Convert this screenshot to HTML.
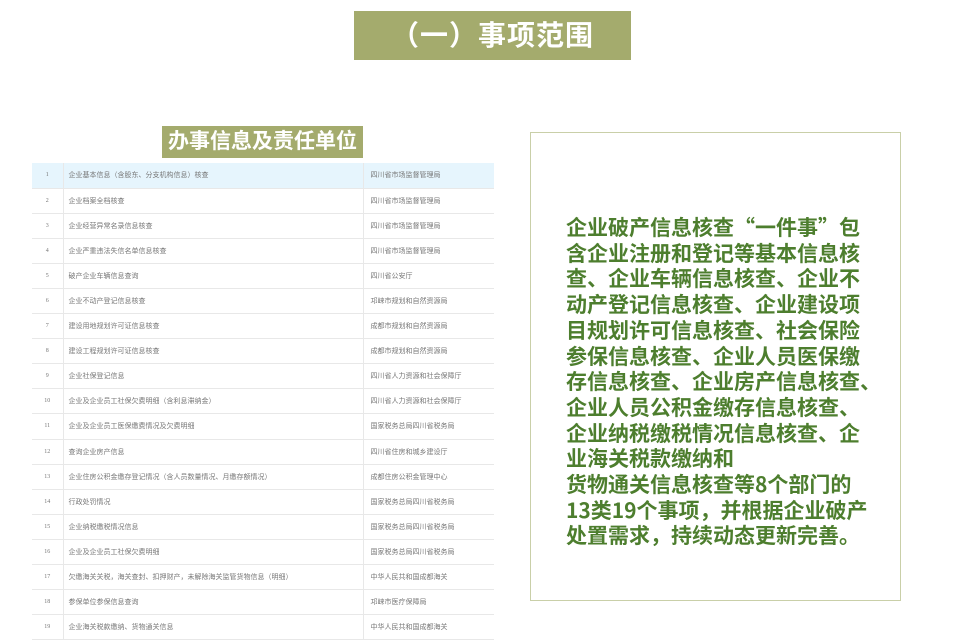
<!DOCTYPE html>
<html><head><meta charset="utf-8"><style>
*{margin:0;padding:0;box-sizing:border-box}
body{width:960px;height:639px;background:#fff;position:relative;overflow:hidden;font-family:"Liberation Sans","Noto Sans CJK SC",sans-serif}
.t1{position:absolute;left:354px;top:11px;width:277px;height:49px;background:#a4ab6d;color:#fff;font-size:28px;font-weight:bold;text-align:center;line-height:49px;letter-spacing:1px}
.t2{position:absolute;left:162px;top:126px;width:201px;height:32px;background:#a4ab6d;color:#fff;font-size:21px;font-weight:bold;text-align:center;line-height:32px}
table{position:absolute;left:32px;top:163px;width:462px;border-collapse:collapse;font-size:7px;color:#777}
td{height:25.1px;border-bottom:1px solid #e8e8e8;vertical-align:middle;white-space:nowrap}
td.n{width:31px;text-align:center;font-size:6px;font-family:"Liberation Serif",serif;border-right:1px solid #e8e8e8}
td.a{width:300px;padding-left:5px;border-right:1px solid #e8e8e8}
td.b{padding-left:7px}
tr.h td{background:#e6f5fd}
.box{position:absolute;left:530px;top:132px;width:371px;height:469px;border:1px solid #c9cfa8}
.txt{position:absolute;left:566px;top:215px;font-family:"Noto Sans CJK SC",sans-serif;font-size:21px;line-height:25.7px;font-weight:bold;color:#4d7e2e;white-space:nowrap}
</style></head><body>
<div class="t1">（一）事项范围</div>
<div class="t2">办事信息及责任单位</div>
<table>
<tr class="h"><td class="n">1</td><td class="a">企业基本信息（含股东、分支机构信息）核查</td><td class="b">四川省市场监督管理局</td></tr>
<tr><td class="n">2</td><td class="a">企业档案全档核查</td><td class="b">四川省市场监督管理局</td></tr>
<tr><td class="n">3</td><td class="a">企业经营异常名录信息核查</td><td class="b">四川省市场监督管理局</td></tr>
<tr><td class="n">4</td><td class="a">企业严重违法失信名单信息核查</td><td class="b">四川省市场监督管理局</td></tr>
<tr><td class="n">5</td><td class="a">破产企业车辆信息查询</td><td class="b">四川省公安厅</td></tr>
<tr><td class="n">6</td><td class="a">企业不动产登记信息核查</td><td class="b">邛崃市规划和自然资源局</td></tr>
<tr><td class="n">7</td><td class="a">建设用地规划许可证信息核查</td><td class="b">成都市规划和自然资源局</td></tr>
<tr><td class="n">8</td><td class="a">建设工程规划许可证信息核查</td><td class="b">成都市规划和自然资源局</td></tr>
<tr><td class="n">9</td><td class="a">企业社保登记信息</td><td class="b">四川省人力资源和社会保障厅</td></tr>
<tr><td class="n">10</td><td class="a">企业及企业员工社保欠费明细（含利息滞纳金）</td><td class="b">四川省人力资源和社会保障厅</td></tr>
<tr><td class="n">11</td><td class="a">企业及企业员工医保缴费情况及欠费明细</td><td class="b">国家税务总局四川省税务局</td></tr>
<tr><td class="n">12</td><td class="a">查询企业房产信息</td><td class="b">四川省住房和城乡建设厅</td></tr>
<tr><td class="n">13</td><td class="a">企业住房公积金缴存登记情况（含人员数量情况、月缴存额情况）</td><td class="b">成都住房公积金管理中心</td></tr>
<tr><td class="n">14</td><td class="a">行政处罚情况</td><td class="b">国家税务总局四川省税务局</td></tr>
<tr><td class="n">15</td><td class="a">企业纳税缴税情况信息</td><td class="b">国家税务总局四川省税务局</td></tr>
<tr><td class="n">16</td><td class="a">企业及企业员工社保欠费明细</td><td class="b">国家税务总局四川省税务局</td></tr>
<tr><td class="n">17</td><td class="a">欠缴海关关税，海关查封、扣押财产，未解除海关监管货物信息（明细）</td><td class="b">中华人民共和国成都海关</td></tr>
<tr><td class="n">18</td><td class="a">参保单位参保信息查询</td><td class="b">邛崃市医疗保障局</td></tr>
<tr><td class="n">19</td><td class="a">企业海关税款缴纳、货物通关信息</td><td class="b">中华人民共和国成都海关</td></tr>
</table>
<div class="box"></div>
<div class="txt">企业破产信息核查“一件事”包<br>含企业注册和登记等基本信息核<br>查、企业车辆信息核查、企业不<br>动产登记信息核查、企业建设项<br>目规划许可信息核查、社会保险<br>参保信息核查、企业人员医保缴<br>存信息核查、企业房产信息核查、<br>企业人员公积金缴存信息核查、<br>企业纳税缴税情况信息核查、企<br>业海关税款缴纳和<br>货物通关信息核查等8个部门的<br>13类19个事项，并根据企业破产<br>处置需求，持续动态更新完善。</div>
</body></html>
